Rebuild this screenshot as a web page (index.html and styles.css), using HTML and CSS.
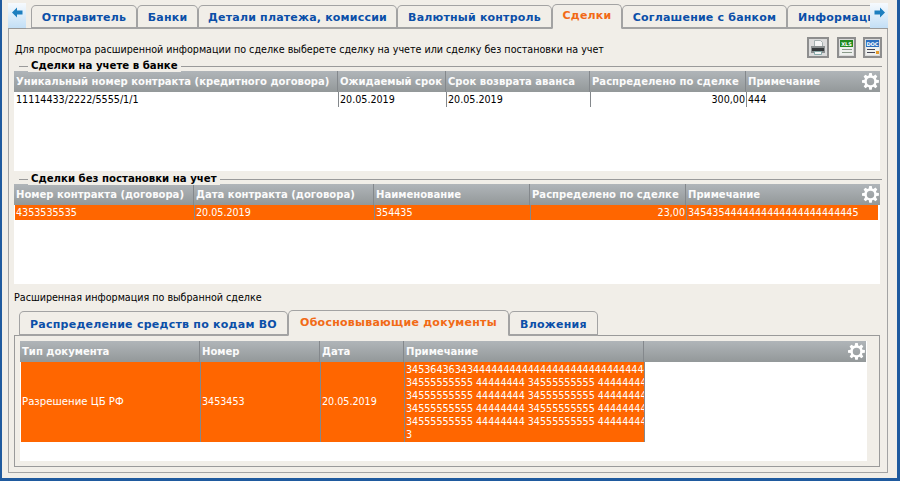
FILE: index.html
```html
<!DOCTYPE html>
<html lang="ru">
<head>
<meta charset="utf-8">
<title>Сделки</title>
<link rel="stylesheet" href="styles.css">
</head>
<body>
<svg class="defs" width="0" height="0" aria-hidden="true">
  <defs>
    <symbol id="gear" viewBox="0 0 16 16">
      <path fill="#fff" d="M6.800 0h2.400l.4 2.300 1.100.5 2-1.300 1.700 1.700-1.300 2 .5 1.100 2.300.4v2.400l-2.300.4-.5 1.100 1.300 2-1.700 1.700-2-1.300-1.100.5-.4 2.300H6.800l-.4-2.300-1.100-.5-2 1.300-1.700-1.700 1.300-2-.5-1.100L0 9.200V6.800l2.300-.4.5-1.100-1.300-2 1.700-1.700 2 1.300 1.100-.5zM8 4.500a3.500 3.500 0 1 0 0 7 3.500 3.500 0 0 0 0-7z" fill-rule="evenodd"/>
    </symbol>
  </defs>
</svg>
<div class="window">
  <div class="tabstrip">
    <button class="scroll"><svg width="11" height="11" viewBox="0 0 11 11"><path fill="#1d7fbf" d="M0 5.500 5 .5V3.500h5.500v4H5v3z"/></svg></button>
    <div class="tabs">
      <span class="tab t1">Отправитель</span>
      <span class="tab t2">Банки</span>
      <span class="tab t3">Детали платежа, комиссии</span>
      <span class="tab t4">Валютный контроль</span>
      <span class="tab active t5">Сделки</span>
      <span class="tab t6">Соглашение с банком</span>
      <span class="tab t7">Информация</span>
    </div>
    <button class="scroll"><svg width="11" height="11" viewBox="0 0 11 11"><path fill="#1d7fbf" d="M11 5.500 6 .5V3.500H.5v4H6v3z"/></svg></button>
  </div>
  <div class="panel">
    <div class="intro">
      <p class="hint">Для просмотра расширенной информации по сделке выберете сделку на учете или сделку без постановки на учет</p>
      <div class="tools">
        <span class="tool wide"><svg width="18" height="17" viewBox="0 0 18 17"><path fill="#f6f6f6" stroke="#a5b0b0" d="M5.500 1.500h6l2 2v4h-8z"/><path fill="#8a8f90" d="M2 7h14v7H2z"/><path fill="#34383a" d="M3 9h12v3H3z"/><path fill="#f4f4f4" stroke="#8aa" d="M5.500 12.500h7v3h-7z"/></svg></span>
        <span class="tool"><svg width="15" height="17" viewBox="0 0 15 17"><path fill="#1f8a1f" d="M1 1h13v7H1z"/><path fill="#eef0ee" d="M1 8h13v8H1z"/><path fill="#8a9a8a" d="M3 10h10v1H3zM3 13h10v1H3z"/><text class="ico" x="7.500" y="6.500" fill="#fff">XLS</text></svg></span>
        <span class="tool"><svg width="15" height="17" viewBox="0 0 15 17"><path fill="#2a6fc0" d="M1 1h13v7H1z"/><path fill="#eef0ee" d="M1 8h13v8H1z"/><path fill="#445" d="M2 10h8v1H2zM2 13h8v1H2z"/><path fill="#e59a2a" d="M11 12h3v3h-3z"/><text class="ico" x="7.500" y="6.500" fill="#fff">DOC</text></svg></span>
      </div>
    </div>

    <h2 class="legend"><span>Сделки на учете в банке</span></h2>
    <div class="grid g1">
      <div class="cols head"><b>Уникальный номер контракта (кредитного договора)</b><b>Ожидаемый срок</b><b>Срок возврата аванса</b><b>Распределено по сделке</b><b>Примечание</b><svg class="gear"><use href="#gear"/></svg></div>
      <div class="cols row"><span>11114433/2222/5555/1/1</span><span>20.05.2019</span><span>20.05.2019</span><span class="num">300,00</span><span>444</span></div>
    </div>

    <h2 class="legend second"><span>Сделки без постановки на учет</span></h2>
    <div class="grid g2">
      <div class="cols head"><b>Номер контракта (договора)</b><b>Дата контракта (договора)</b><b>Наименование</b><b>Распределено по сделке</b><b>Примечание</b><svg class="gear"><use href="#gear"/></svg></div>
      <div class="cols row sel"><span>4353535535</span><span>20.05.2019</span><span>354435</span><span class="num">23,00</span><span>3454354444444444444444444445</span></div>
    </div>

    <p class="hint ext">Расширенная информация по выбранной сделке</p>

    <div class="subtabs">
      <span class="subtab s1">Распределение средств по кодам ВО</span>
      <span class="subtab active s2">Обосновывающие документы</span>
      <span class="subtab s3">Вложения</span>
    </div>
    <div class="subpanel">
      <div class="grid g3">
        <div class="cols head"><b>Тип документа</b><b>Номер</b><b>Дата</b><b>Примечание</b><b></b><svg class="gear"><use href="#gear"/></svg></div>
        <div class="cols row sel tall"><span class="label">Разрешение ЦБ РФ</span><span>3453453</span><span>20.05.2019</span><span class="multi">34536436343444444444444444444444444444444444<br>34555555555 44444444 34555555555 44444444<br>34555555555 44444444 34555555555 44444444<br>34555555555 44444444 34555555555 44444444<br>34555555555 44444444 34555555555 44444444<br>3</span></div>
      </div>
    </div>
  </div>
</div>
</body>
</html>
```
FILE: styles.css
```css
* { box-sizing: border-box; }
html, body { margin: 0; height: 100%; }
body {
  font: 10.65px/13px "DejaVu Sans Condensed", "DejaVu Sans", sans-serif;
  color: #000;
  background: #f1eee8;
  overflow: hidden;
}
.defs { position: absolute; }
.window {
  width: 900px;
  height: 481px;
  border-left: 2px solid #1f5a9e;
  border-right: 3px solid #1f5a9e;
  border-bottom: 3px solid #1f5a9e;
  padding: 3px 9px 5px 6px;
  display: flex;
  flex-direction: column;
}
.tabstrip { display: flex; height: 26px; align-items: flex-end; position: relative; z-index: 1; }
.scroll {
  width: 18px;
  height: 26px;
  padding: 0 0 6px;
  border: 0;
  border-bottom: 1px solid #9a9a9a;
  background: linear-gradient(#f6fafe, #c3dff6);
  display: flex;
  align-items: center;
  justify-content: center;
}
.tabs { flex: 1; display: flex; padding-left: 5px; overflow: hidden; align-items: flex-end; }
.tab, .subtab {
  flex: none;
  display: block;
  font: bold 11px/19px "DejaVu Sans", sans-serif;
  letter-spacing: .2px;
  color: #0b4fa8;
  text-align: center;
  border: 1px solid #a3a3a3;
  border-bottom-width: 2px;
  border-radius: 5px 5px 0 0;
  white-space: nowrap;
}
.tab { height: 24px; padding-top: 2px; }
.tab.active, .subtab.active {
  color: #f26a16;
  background: #f1eee8;
  border-bottom: 1px solid #f1eee8;
}
.tab.active { height: 25px; padding-top: 1px; }
.t1 { width: 106px; } .t2 { width: 61px; } .t3 { width: 199px; } .t4 { width: 155px; }
.t5 { width: 70px; } .t6 { width: 165px; } .t7 { width: 100px; text-align: left; padding-left: 10px; }
.panel {
  flex: 1;
  margin-top: -1px;
  border: 1px solid #a3a3a3;
  padding: 0 7px 5px 5px;
  display: flex;
  flex-direction: column;
}
.intro { height: 34px; display: flex; justify-content: space-between; padding-top: 8px; }
.hint { margin: 0; padding: 6px 0 0 1px; }
.tools { display: flex; gap: 8px; margin-right: -2px; }
.tool {
  width: 19px;
  height: 21px;
  background: #dcdcdc;
  border: 2px solid #8e8e8e;
  display: flex;
  align-items: center;
  justify-content: center;
}
.tool.wide { width: 22px; }
.tool + .tool + .tool { margin-left: -1px; }
.ico { font: bold 5px "DejaVu Sans", sans-serif; text-anchor: middle; }
.legend {
  margin: 0 -2px 0 0;
  height: 8px;
  display: flex;
  align-items: center;
  font: bold 11.3px/13px "DejaVu Sans Condensed", "DejaVu Sans", sans-serif;
  background: linear-gradient(#9a9a9a, #9a9a9a) 5px 3px / 100% 1px no-repeat;
  position: relative;
  z-index: 1;
}
.legend span { background: #f1eee8; padding: 0 3px; margin-left: 14px; position: relative; top: -2px; }
.second { margin-top: 5px; }
.grid { background: #fff; overflow: hidden; }
.g1 { height: 100px; }
.g2 { height: 100px; }
.cols { display: grid; position: relative; white-space: nowrap; }
.g1 .cols { grid-template-columns: 324px 108px 144px 156px 134px; }
.g2 .cols { grid-template-columns: 180px 180px 156px 156px 194px; }
.g3 .cols { grid-template-columns: 180px 120px 84px 240px 222px; }
.head {
  height: 21px;
  background: linear-gradient(#b0b5b9, #939899);
  color: #fbfbfb;
}
.head b {
  font: bold 10.05px/22px "DejaVu Sans", sans-serif;
  padding-left: 2px;
  border-right: 1px solid #84888c;
  overflow: hidden;
}
.head b:last-of-type { border-right: 0; }
.gear { position: absolute; right: 1px; top: 2px; width: 17px; height: 17px; }
.row { height: 15px; line-height: 16px; margin: 0 2px 0 1px; }
.row span {
  padding-left: 1px;
  border-right: 1px solid #84888c;
  overflow: hidden;
}
.row span.num { text-align: right; padding-right: 1px; }
.row.sel { background: #ff6600; color: #fff; }
.ext { padding: 7px 0 0; height: 26px; }
.subtabs { display: flex; height: 26px; padding-left: 5px; align-items: flex-end; position: relative; z-index: 1; }
.subtab { height: 25px; padding-top: 3px; letter-spacing: .25px; }
.subtab.active { height: 26px; padding-top: 2px; }
.s1 { width: 269px; } .s2 { width: 221px; } .s3 { width: 89px; }
.subpanel {
  margin-top: -1px;
  height: 132px;
  border: 1px solid #9a9a9a;
  padding: 5px 12px 4px 5px;
}
.g3 { height: 120px; }
.g3 .head { width: 846px; }
.g3 .tall { height: 80px; width: 624px; grid-template-columns: 180px 120px 84px 240px; }
.tall span { display: flex; align-items: center; height: 80px; }
.tall span.label { font-size: 11.3px; }
.tall span.multi { display: block; line-height: 13px; padding-top: 1px; }
```
